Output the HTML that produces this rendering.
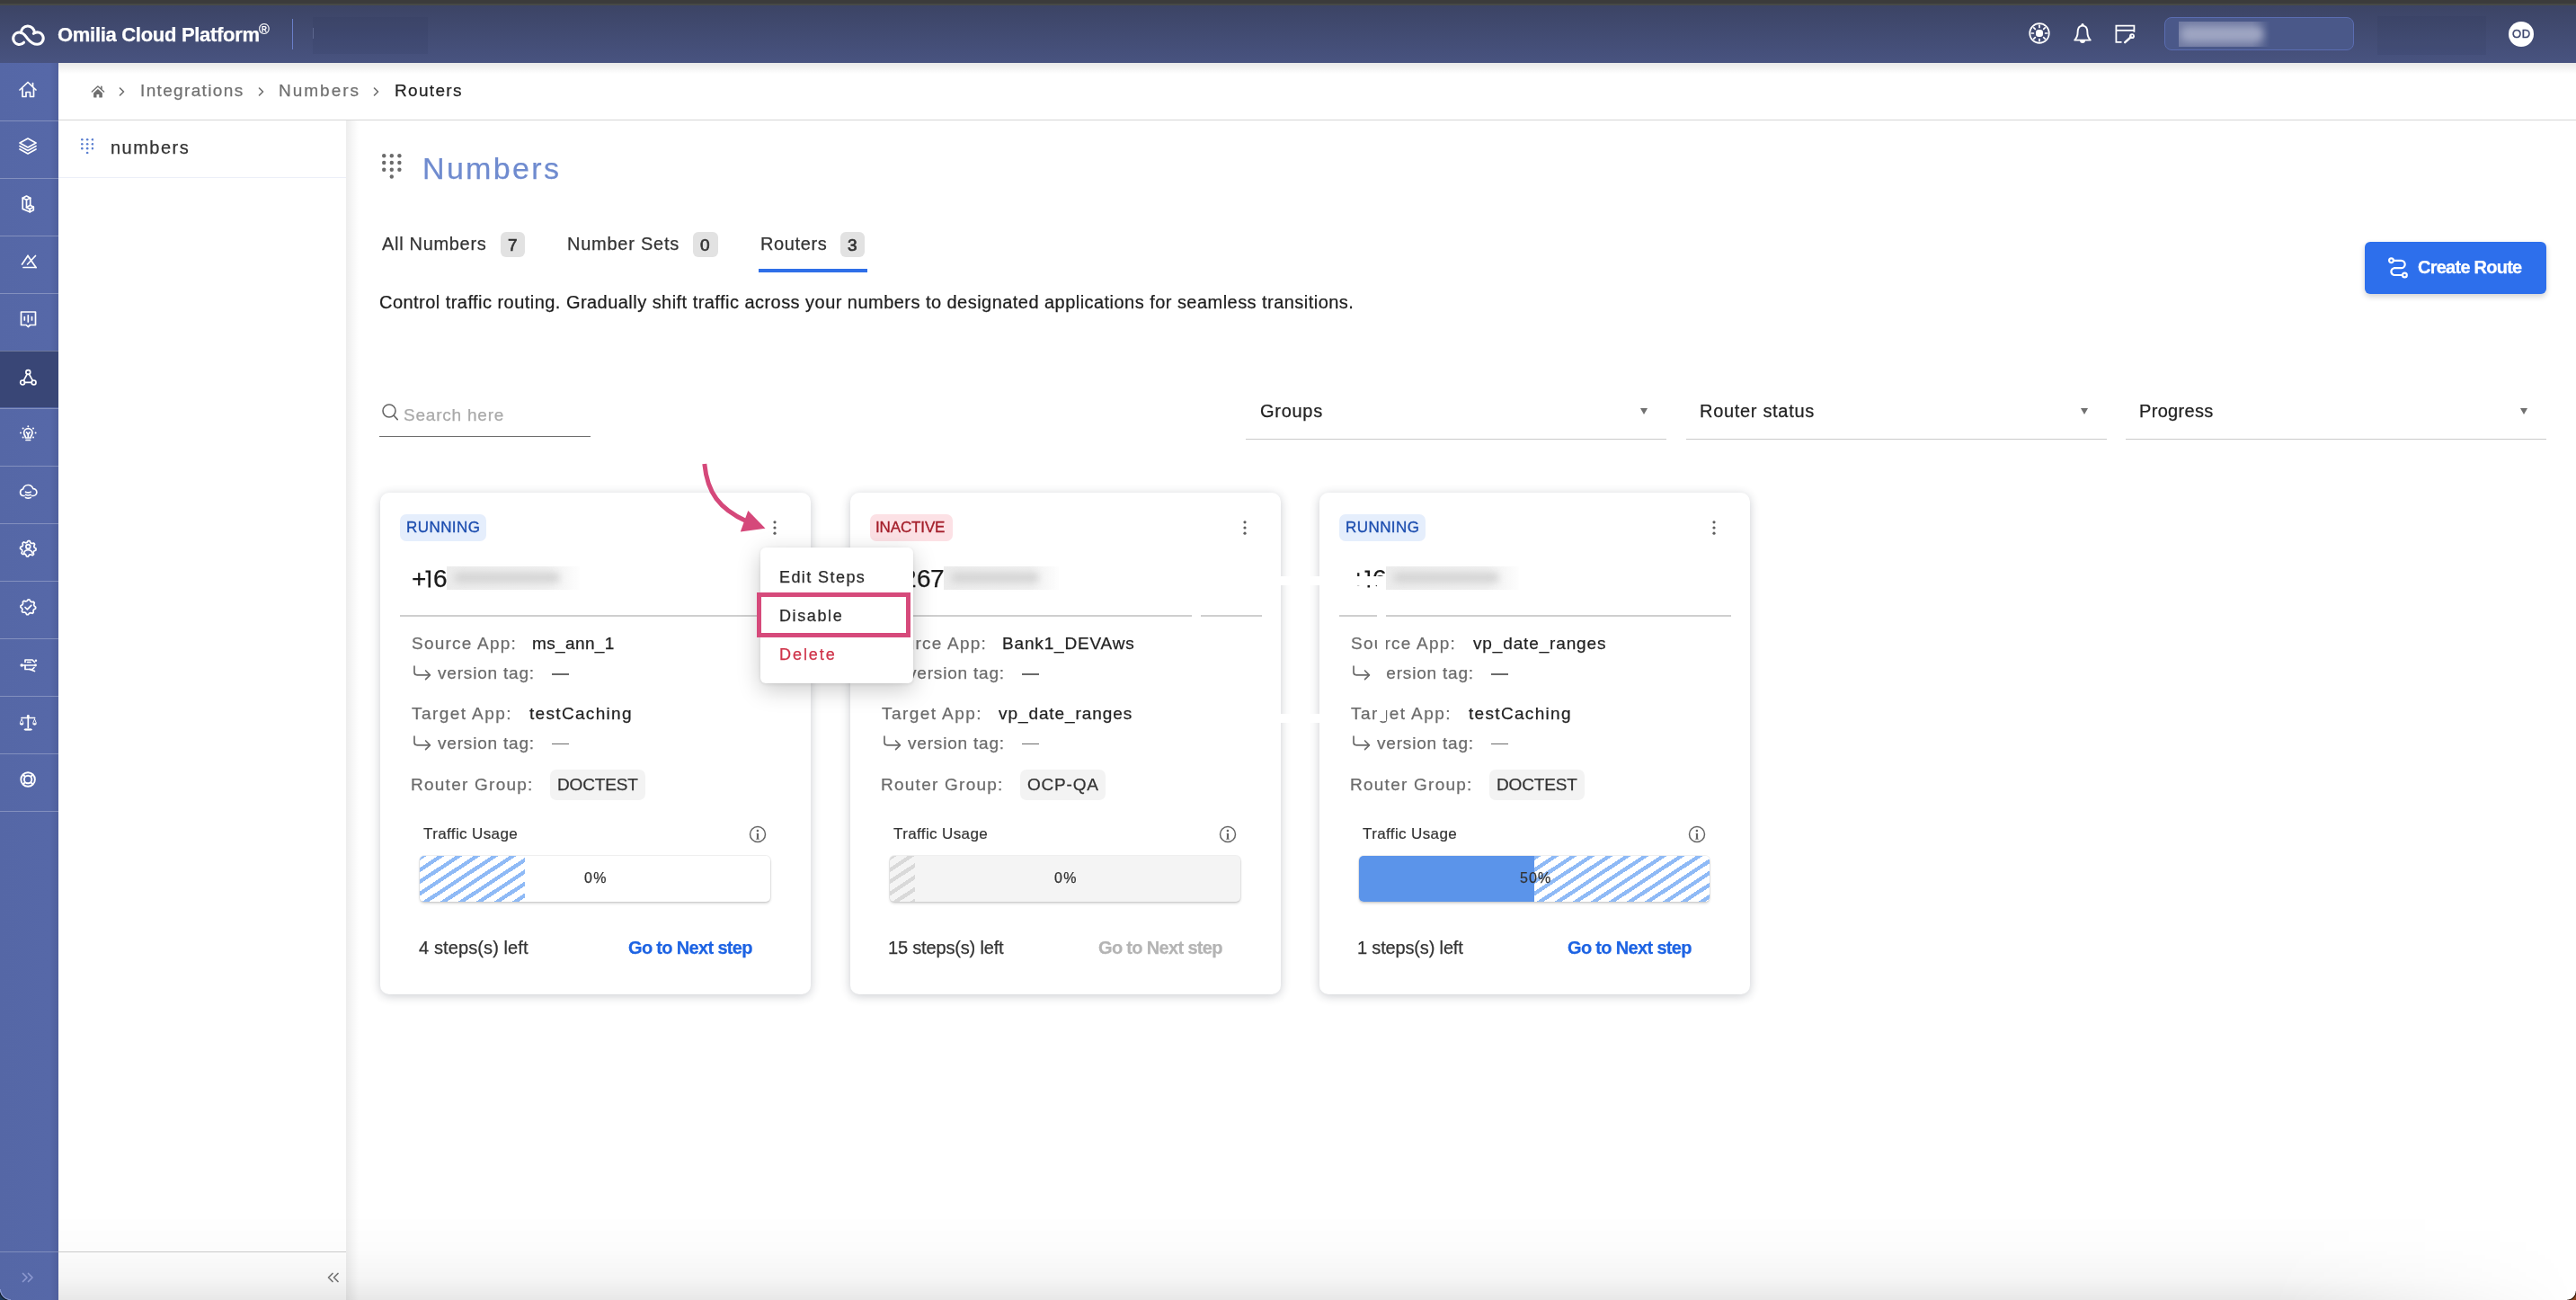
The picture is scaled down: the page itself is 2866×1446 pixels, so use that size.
<!DOCTYPE html><html><head><meta charset="utf-8"><title>Omilia Cloud Platform - Routers</title><style>
*{margin:0;padding:0;box-sizing:border-box}
html,body{width:2866px;height:1446px;overflow:hidden;background:#fff;font-family:"Liberation Sans",sans-serif}
.t{position:absolute;line-height:1;white-space:pre;will-change:transform;-webkit-text-stroke:0.25px currentColor}
.abs{position:absolute}
</style></head><body>
<div class="abs" style="left:0;top:0;width:2866px;height:6px;background:linear-gradient(180deg,#3b3b3b 0%,#3b3b3b 62%,#474946 72%,#474946 100%)"></div>
<div class="abs" style="left:0;top:6px;width:2866px;height:64px;background:linear-gradient(180deg,#3c4465 0%,#485380 100%)"></div>
<svg class="abs" style="left:8px;top:18px;" width="50" height="40" viewBox="0 0 50 40"><g fill="none" stroke="#fff" stroke-width="3" stroke-linecap="round"><path d="M18.6,29.2 A6.8,6.8 0 1,1 13.5,17.9 C19,17.9 21,23 23.3,25.8 C26,29 28.5,31.3 33.2,31.3 A6.7,6.7 0 1,0 29.3,19.4"/><path d="M15.4,18.8 A7.5,7.7 0 1,1 30.4,18.5"/></g></svg>
<div class="t" style="left:63.6px;top:28.1px;font-size:22px;color:#fff;font-weight:bold;letter-spacing:-0.30px;">Omilia Cloud Platform</div>
<div class="t" style="left:287.8px;top:25.4px;font-size:16px;color:#fff;font-weight:normal;letter-spacing:0.00px;">®</div>
<div class="abs" style="left:325px;top:21px;width:1.2px;height:34px;background:#6a7fc8"></div>
<div class="abs" style="left:348px;top:19px;width:128px;height:41px;background:rgba(40,48,80,0.11)"></div>
<div class="abs" style="left:348px;top:31px;width:1px;height:12px;background:rgba(150,160,200,0.35)"></div>
<svg class="abs" style="left:2256.5px;top:25.4px;" width="24" height="24" viewBox="0 0 24 24"><g fill="none" stroke="#fff" stroke-width="1.7" stroke-linecap="round"><circle cx="12" cy="12" r="10.8"/><line x1="18.60" y1="12.00" x2="20.80" y2="12.00"/><line x1="16.67" y1="16.67" x2="18.22" y2="18.22"/><line x1="12.00" y1="18.60" x2="12.00" y2="20.80"/><line x1="7.33" y1="16.67" x2="5.78" y2="18.22"/><line x1="5.40" y1="12.00" x2="3.20" y2="12.00"/><line x1="7.33" y1="7.33" x2="5.78" y2="5.78"/><line x1="12.00" y1="5.40" x2="12.00" y2="3.20"/><line x1="16.67" y1="7.33" x2="18.22" y2="5.78"/></g><rect x="8" y="8" width="8" height="8" rx="3.2" fill="#fff"/></svg><svg class="abs" style="left:2305.5px;top:24.5px;" width="22" height="25" viewBox="0 0 22 25"><g fill="none" stroke="#fff" stroke-width="1.9" stroke-linejoin="round"><path d="M11,3.6 C6.6,3.6 5.6,7.5 5.6,11 C5.6,15.5 4.4,17.4 2.2,19.6 L19.8,19.6 C17.6,17.4 16.4,15.5 16.4,11 C16.4,7.5 15.4,3.6 11,3.6 Z"/></g><circle cx="11" cy="2.6" r="1.6" fill="#fff"/><path d="M8,20 A3,3 0 0,0 14,20 Z" fill="#fff"/></svg><svg class="abs" style="left:2352.5px;top:26.5px;" width="24" height="23" viewBox="0 0 24 23"><g fill="none" stroke="#fff" stroke-width="1.8"><path d="M7.5,19.8 L1.4,19.8 L1.4,1.6 L21.4,1.6 L21.4,8.8"/><line x1="1.4" y1="6.8" x2="21.4" y2="6.8"/></g><circle cx="19" cy="13.2" r="2.9" fill="#fff"/><circle cx="19.3" cy="12.9" r="0.9" fill="#4a5584"/><path d="M17.5,14.5 L11.2,20.2" stroke="#fff" stroke-width="2.4" stroke-linecap="round"/></svg>
<div class="abs" style="left:2408px;top:19px;width:211px;height:37px;border-radius:8px;background:#4a5889;border:1.5px solid #5b6db2"></div>
<div class="abs" style="left:2424px;top:24px;width:102px;height:28px;overflow:hidden;background:linear-gradient(90deg,rgba(130,138,174,0.7) 0%,rgba(130,138,174,0.65) 80%,rgba(130,138,174,0) 100%)"><div style="position:absolute;left:2px;top:5px;width:92px;height:18px;border-radius:8px;background:#9ea5c2;filter:blur(4px)"></div></div>
<div class="abs" style="left:2645px;top:18px;width:121px;height:43px;background:rgba(40,48,80,0.10)"></div>
<div class="abs" style="left:2791px;top:23.5px;width:28px;height:28px;border-radius:50%;background:#fff"></div>
<div class="t" style="left:2794.8px;top:31.4px;font-size:13px;color:#3f4870;font-weight:normal;letter-spacing:0.75px;-webkit-text-stroke:0.4px #3f4870;">OD</div>
<div class="abs" style="left:0;top:70px;width:65px;height:1376px;background:linear-gradient(90deg,#5567a6 0%,#5668a8 85%,#4f5f9c 100%)"></div>
<div class="abs" style="left:0;top:389.5px;width:65px;height:63.5px;background:#394676"></div>
<div class="abs" style="left:0;top:133.5px;width:65px;height:1px;background:rgba(255,255,255,0.27)"></div>
<div class="abs" style="left:0;top:197.5px;width:65px;height:1px;background:rgba(255,255,255,0.27)"></div>
<div class="abs" style="left:0;top:261.5px;width:65px;height:1px;background:rgba(255,255,255,0.27)"></div>
<div class="abs" style="left:0;top:325.5px;width:65px;height:1px;background:rgba(255,255,255,0.27)"></div>
<div class="abs" style="left:0;top:389.5px;width:65px;height:1px;background:rgba(255,255,255,0.27)"></div>
<div class="abs" style="left:0;top:453.5px;width:65px;height:1px;background:rgba(255,255,255,0.27)"></div>
<div class="abs" style="left:0;top:517.5px;width:65px;height:1px;background:rgba(255,255,255,0.27)"></div>
<div class="abs" style="left:0;top:581.5px;width:65px;height:1px;background:rgba(255,255,255,0.27)"></div>
<div class="abs" style="left:0;top:645.5px;width:65px;height:1px;background:rgba(255,255,255,0.27)"></div>
<div class="abs" style="left:0;top:709.5px;width:65px;height:1px;background:rgba(255,255,255,0.27)"></div>
<div class="abs" style="left:0;top:773.5px;width:65px;height:1px;background:rgba(255,255,255,0.27)"></div>
<div class="abs" style="left:0;top:837.5px;width:65px;height:1px;background:rgba(255,255,255,0.27)"></div>
<div class="abs" style="left:0;top:901.5px;width:65px;height:1px;background:rgba(255,255,255,0.27)"></div>
<svg class="abs" style="left:21px;top:89px;" width="20" height="20" viewBox="0 0 20 20"><g fill="none" stroke="#fff" stroke-width="1.7" stroke-linecap="round" stroke-linejoin="round"><path d="M1,11 L10,2.5 L19,11"/><path d="M15.5,3.5 L15.5,7.5"/><path d="M4,9.5 L4,18.5 L8,18.5 L8,13.5 L12.5,13.5 L12.5,18.5 L16.5,18.5 L16.5,9.5"/></g></svg><svg class="abs" style="left:21px;top:152px;" width="20" height="21" viewBox="0 0 20 21"><g fill="none" stroke="#fff" stroke-width="1.7" stroke-linecap="round" stroke-linejoin="round"><path d="M10,2 L19,7 L10,12 L1,7 Z"/><path d="M1,10.5 L10,15.5 L19,10.5"/><path d="M1,14 L10,19 L19,14"/></g></svg><svg class="abs" style="left:18px;top:205px;" width="28" height="40" viewBox="0 0 28 40"><g fill="none" stroke="#fff" stroke-width="1.7" stroke-linecap="round" stroke-linejoin="round"><path d="M7.2,15.2 L11.5,13.1 L15.7,15.2 L11.5,17.3 Z"/><path d="M7.2,15.2 L7.2,27.4 L15.2,30.8 L19.3,28.8 L19.3,25.2 L15.5,23.3"/><path d="M11.5,17.3 L11.5,25.8 L15.2,27.6 L19.3,25.2"/><path d="M15.7,15.2 L15.7,23.2"/><path d="M15.2,27.6 L15.2,30.8"/><path d="M11.5,25.8 L15.5,23.3"/></g></svg><svg class="abs" style="left:21px;top:282px;" width="22" height="18" viewBox="0 0 22 18"><g fill="none" stroke="#fff" stroke-width="1.7" stroke-linecap="round" stroke-linejoin="round"><path d="M3.5,12 L10,2.5"/><path d="M10,2.5 L19,15.5"/><path d="M5,15.5 L19,15.5"/><path d="M9.5,12 L18.5,2.5"/></g></svg><svg class="abs" style="left:21px;top:345px;" width="21" height="21" viewBox="0 0 21 21"><g fill="none" stroke="#fff" stroke-width="1.7" stroke-linecap="round" stroke-linejoin="round"><path d="M2.5,2 L18.5,2 L18.5,16.5 L12.5,16.5 L10.3,18.5 L8.2,16.5 L2.5,16.5 Z"/><path d="M6.3,7.5 L6.3,11"/><path d="M10.3,5.8 L10.3,13"/><path d="M14.5,7.5 L14.5,11"/></g></svg><svg class="abs" style="left:21px;top:410px;" width="21" height="20" viewBox="0 0 21 20"><g fill="none" stroke="#fff" stroke-width="1.7" stroke-linecap="round" stroke-linejoin="round"><circle cx="10.3" cy="4" r="2.4"/><circle cx="4.1" cy="15.4" r="2.4"/><circle cx="16.6" cy="15.4" r="2.4"/><path d="M9.2,6.1 L5.3,13.3"/><path d="M11.4,6.1 L15.4,13.3"/><path d="M6.5,15.4 L14.2,15.4"/></g></svg><svg class="abs" style="left:21px;top:472px;" width="21" height="21" viewBox="0 0 21 21"><g fill="none" stroke="#fff" stroke-width="1.7" stroke-linecap="round" stroke-linejoin="round"><path d="M7.5,15 C7.5,12.5 5.6,12 5.6,9.3 A4.7,4.7 0 0,1 15,9.3 C15,12 13.1,12.5 13.1,15 Z"/><path d="M8,17.5 L12.6,17.5"/><path d="M8.6,9 L10.3,11 L12,9"/><path d="M10.3,11 L10.3,14"/></g><g fill="#fff"><circle cx="10.3" cy="2.2" r="1"/><circle cx="16" cy="4.5" r="1"/><circle cx="4.6" cy="4.5" r="1"/><circle cx="2" cy="9.5" r="1"/><circle cx="18.6" cy="9.5" r="1"/><circle cx="4.6" cy="14.5" r="1"/><circle cx="16" cy="14.5" r="1"/></g></svg><svg class="abs" style="left:21px;top:537px;" width="21" height="20" viewBox="0 0 21 20"><g fill="none" stroke="#fff" stroke-width="1.7" stroke-linecap="round" stroke-linejoin="round"><path d="M6,14.5 L5,14.5 A3.8,3.8 0 0,1 4.6,7 A5.8,5.8 0 0,1 15.8,6.6 A3.9,3.9 0 0,1 16,14.5 L14.5,14.5"/><path d="M7.5,10.2 Q10.3,11.6 13.1,10.2"/><path d="M7.5,13.3 Q10.3,14.7 13.1,13.3"/><path d="M7.5,16.4 Q10.3,17.8 13.1,16.4"/></g></svg><svg class="abs" style="left:21px;top:600px;" width="21" height="21" viewBox="0 0 21 21"><g fill="none" stroke="#fff" stroke-width="1.7" stroke-linecap="round" stroke-linejoin="round"><path d="M10.30,1.50 L12.02,1.67 L12.98,3.83 L14.19,4.48 L16.52,4.08 L17.62,5.41 L16.77,7.62 L17.17,8.93 L19.10,10.30 L18.93,12.02 L16.77,12.98 L16.12,14.19 L16.52,16.52 L15.19,17.62 L12.98,16.77 L11.67,17.17 L10.30,19.10 L8.58,18.93 L7.62,16.77 L6.41,16.12 L4.08,16.52 L2.98,15.19 L3.83,12.98 L3.43,11.67 L1.50,10.30 L1.67,8.58 L3.83,7.62 L4.48,6.41 L4.08,4.08 L5.41,2.98 L7.62,3.83 L8.93,3.43 Z"/><circle cx="10.3" cy="8" r="2.4"/><path d="M5.6,15.2 A4.8,4.3 0 0,1 15,15.2"/></g></svg><svg class="abs" style="left:22px;top:666px;" width="19" height="19" viewBox="0 0 19 19"><g fill="none" stroke="#fff" stroke-width="1.7" stroke-linecap="round" stroke-linejoin="round"><path d="M9.30,0.90 L10.94,1.06 L11.94,2.93 L13.13,3.56 L15.24,3.36 L16.28,4.63 L15.67,6.66 L16.07,7.95 L17.70,9.30 L17.54,10.94 L15.67,11.94 L15.04,13.13 L15.24,15.24 L13.97,16.28 L11.94,15.67 L10.65,16.07 L9.30,17.70 L7.66,17.54 L6.66,15.67 L5.47,15.04 L3.36,15.24 L2.32,13.97 L2.93,11.94 L2.53,10.65 L0.90,9.30 L1.06,7.66 L2.93,6.66 L3.56,5.47 L3.36,3.36 L4.63,2.32 L6.66,2.93 L7.95,2.53 Z"/><path d="M6,9.5 L8.4,11.8 L12.8,7.3"/></g></svg><svg class="abs" style="left:21px;top:731px;" width="22" height="18" viewBox="0 0 22 18"><g fill="none" stroke="#fff" stroke-width="1.7" stroke-linecap="round" stroke-linejoin="round"><path d="M7,5.5 L7,3 L15,3 L17.5,5.5"/><path d="M4,9 L18,9"/><path d="M7,9 L7,13.5 L15,13.5 L17,11.5"/><path d="M9.5,5.5 L13,5.5"/><path d="M12,13.5 L17.5,15.5"/></g><circle cx="3.2" cy="9" r="1.8" fill="#fff"/><circle cx="18.5" cy="9" r="1.4" fill="#fff"/><circle cx="19" cy="3.8" r="1.2" fill="#fff"/></svg><svg class="abs" style="left:21px;top:794px;" width="21" height="20" viewBox="0 0 21 20"><g fill="none" stroke="#fff" stroke-width="1.7" stroke-linecap="round" stroke-linejoin="round"><path d="M10.3,2 L10.3,15.5"/><path d="M3,4.5 L17.6,4.5"/><path d="M6.5,17.5 L14,17.5"/></g><g fill="#fff"><path d="M0.7,10.3 L5.5,10.3 A2.4,2.4 0 0,1 0.7,10.3 Z M3.1,4.8 L0.9,10 L1.8,10 L3.1,6.8 L4.4,10 L5.3,10 Z"/><path d="M15.1,10.3 L19.9,10.3 A2.4,2.4 0 0,1 15.1,10.3 Z M17.5,4.8 L15.3,10 L16.2,10 L17.5,6.8 L18.8,10 L19.7,10 Z"/><path d="M6.5,16.5 L14,16.5 L13.5,18.5 L7,18.5 Z"/><circle cx="10.3" cy="2.5" r="1.5"/></g></svg><svg class="abs" style="left:21px;top:857px;" width="21" height="21" viewBox="0 0 21 21"><g fill="none" stroke="#fff" stroke-width="1.9"><circle cx="10.1" cy="10" r="7.8"/><circle cx="10.1" cy="10" r="4.2"/><path d="M4.6,4.5 L7.2,7.1 M15.6,4.5 L13,7.1 M4.6,15.5 L7.2,12.9 M15.6,15.5 L13,12.9"/></g></svg>
<div class="abs" style="left:0;top:1392px;width:65px;height:1px;background:rgba(255,255,255,0.25)"></div>
<svg class="abs" style="left:24.2px;top:1415px;" width="14" height="12" viewBox="0 0 14 12"><path d="M1.5,1.5 L6,6 L1.5,10.5 M7.5,1.5 L12,6 L7.5,10.5" fill="none" stroke="#8d99d0" stroke-width="1.7" stroke-linecap="round" stroke-linejoin="round"/></svg>
<div class="abs" style="left:65px;top:70px;width:2801px;height:64px;background:#fff;border-bottom:1.5px solid #d6d6d6"></div>
<div class="abs" style="left:65px;top:70px;width:2801px;height:12px;background:linear-gradient(180deg,rgba(0,0,0,0.09),rgba(0,0,0,0))"></div>
<svg class="abs" style="left:100px;top:94px;" width="18" height="16" viewBox="0 0 18 16"><path d="M2.3,8.1 L8.9,2 L15.6,8.1" fill="none" stroke="#707070" stroke-width="1.4" stroke-linecap="round" stroke-linejoin="round"/><path d="M12.9,2.4 L12.9,4.8" stroke="#707070" stroke-width="1.6" stroke-linecap="round"/><path d="M8.9,5.1 L13.9,9.4 L13.9,14 Q13.9,14.4 13.4,14.4 L10.3,14.4 L10.3,10.9 L7.5,10.9 L7.5,14.4 L4.6,14.4 Q4.1,14.4 4.1,14 L4.1,9.4 Z" fill="#707070"/></svg>
<svg class="abs" style="left:131.5px;top:97px;" width="7" height="10" viewBox="0 0 7 10"><path d="M1.5,1 L5.5,5 L1.5,9" fill="none" stroke="#6d6d6d" stroke-width="1.6" stroke-linecap="round" stroke-linejoin="round"/></svg>
<svg class="abs" style="left:286.5px;top:97px;" width="7" height="10" viewBox="0 0 7 10"><path d="M1.5,1 L5.5,5 L1.5,9" fill="none" stroke="#6d6d6d" stroke-width="1.6" stroke-linecap="round" stroke-linejoin="round"/></svg>
<svg class="abs" style="left:414.5px;top:97px;" width="7" height="10" viewBox="0 0 7 10"><path d="M1.5,1 L5.5,5 L1.5,9" fill="none" stroke="#6d6d6d" stroke-width="1.6" stroke-linecap="round" stroke-linejoin="round"/></svg>
<div class="t" style="left:156.2px;top:90.9px;font-size:19px;color:#707070;font-weight:normal;letter-spacing:1.35px;">Integrations</div>
<div class="t" style="left:309.9px;top:90.9px;font-size:19px;color:#707070;font-weight:normal;letter-spacing:1.99px;">Numbers</div>
<div class="t" style="left:438.9px;top:90.9px;font-size:19px;color:#222;font-weight:normal;letter-spacing:1.33px;">Routers</div>
<div class="abs" style="left:385px;top:134px;width:14px;height:1312px;background:linear-gradient(90deg,rgba(0,0,0,0.07),rgba(0,0,0,0))"></div>
<div class="abs" style="left:65px;top:197px;width:320px;height:1px;background:#eceff8"></div>
<svg class="abs" style="left:90px;top:154px;" width="14.3" height="17.4" viewBox="0 0 14.3 17.4"><g fill="#5b7fd0"><circle cx="1.30" cy="1.30" r="1.3"/><circle cx="7.15" cy="1.30" r="1.3"/><circle cx="13.00" cy="1.30" r="1.3"/><circle cx="1.30" cy="6.23" r="1.3"/><circle cx="7.15" cy="6.23" r="1.3"/><circle cx="13.00" cy="6.23" r="1.3"/><circle cx="1.30" cy="11.17" r="1.3"/><circle cx="7.15" cy="11.17" r="1.3"/><circle cx="13.00" cy="11.17" r="1.3"/><circle cx="7.15" cy="16.10" r="1.3"/></g></svg>
<div class="t" style="left:123.2px;top:154.2px;font-size:20px;color:#333;font-weight:normal;letter-spacing:1.47px;">numbers</div>
<div class="abs" style="left:65px;top:1392px;width:320px;height:1px;background:#cfcfcf"></div>
<svg class="abs" style="left:364.2px;top:1415px;" width="14" height="12" viewBox="0 0 14 12"><path d="M6,1.5 L1.5,6 L6,10.5 M12,1.5 L7.5,6 L12,10.5" fill="none" stroke="#777" stroke-width="1.7" stroke-linecap="round" stroke-linejoin="round"/></svg>
<svg class="abs" style="left:425px;top:171px;" width="21.6" height="27.7" viewBox="0 0 21.6 27.7"><g fill="#6b6b6b"><circle cx="2.20" cy="2.20" r="2.2"/><circle cx="10.80" cy="2.20" r="2.2"/><circle cx="19.40" cy="2.20" r="2.2"/><circle cx="2.20" cy="9.97" r="2.2"/><circle cx="10.80" cy="9.97" r="2.2"/><circle cx="19.40" cy="9.97" r="2.2"/><circle cx="2.20" cy="17.73" r="2.2"/><circle cx="10.80" cy="17.73" r="2.2"/><circle cx="19.40" cy="17.73" r="2.2"/><circle cx="10.80" cy="25.50" r="2.2"/></g></svg>
<div class="t" style="left:470.2px;top:170.1px;font-size:34px;color:#6f8bcf;font-weight:normal;letter-spacing:2.33px;">Numbers</div>
<div class="t" style="left:425.0px;top:261.2px;font-size:20px;color:#333;font-weight:normal;letter-spacing:0.68px;">All Numbers</div>
<div class="abs" style="left:557px;top:258px;width:27px;height:28px;border-radius:6px;background:#e2e2e2"></div><div class="t" style="left:565.1px;top:262.5px;font-size:19px;color:#333;font-weight:normal;letter-spacing:0.00px;-webkit-text-stroke:0.7px #333;">7</div>
<div class="t" style="left:631.0px;top:261.2px;font-size:20px;color:#333;font-weight:normal;letter-spacing:0.75px;">Number Sets</div>
<div class="abs" style="left:770.5px;top:258px;width:28px;height:28px;border-radius:6px;background:#e2e2e2"></div><div class="t" style="left:779.2px;top:262.5px;font-size:19px;color:#333;font-weight:normal;letter-spacing:0.00px;-webkit-text-stroke:0.7px #333;">0</div>
<div class="t" style="left:845.9px;top:261.2px;font-size:20px;color:#333;font-weight:normal;letter-spacing:0.64px;">Routers</div>
<div class="abs" style="left:935px;top:258px;width:27px;height:28px;border-radius:6px;background:#e2e2e2"></div><div class="t" style="left:943.2px;top:262.5px;font-size:19px;color:#333;font-weight:normal;letter-spacing:0.00px;-webkit-text-stroke:0.7px #333;">3</div>
<div class="abs" style="left:844px;top:298.5px;width:121px;height:4px;background:#2f6fe8"></div>
<div class="t" style="left:421.5px;top:326.0px;font-size:20px;color:#1e1e1e;font-weight:normal;letter-spacing:0.46px;">Control traffic routing. Gradually shift traffic across your numbers to designated applications for seamless transitions.</div>
<div class="abs" style="left:2631px;top:269px;width:202px;height:58px;border-radius:6px;background:#2d6fec;box-shadow:0 3px 6px rgba(0,0,0,0.18)"></div>
<svg class="abs" style="left:2656.5px;top:286.2px;" width="23" height="25" viewBox="0 0 23 25"><g fill="none" stroke="#fff" stroke-width="2.2" stroke-linecap="round"><circle cx="3.5" cy="3.8" r="2.4"/><circle cx="18.4" cy="20" r="2.4"/><path d="M6.8,3.8 L14.5,3.8 A4.2,4.2 0 0,1 14.5,12.2 L6.5,12.2 A4,4 0 0,0 6.5,20 L15,20"/></g></svg>
<div class="t" style="left:2689.9px;top:287.2px;font-size:20px;color:#fff;font-weight:bold;letter-spacing:-0.75px;">Create Route</div>
<svg class="abs" style="left:424.8px;top:448.8px;" width="19" height="19" viewBox="0 0 19 19"><g fill="none" stroke="#666" stroke-width="1.6" stroke-linecap="round"><circle cx="8" cy="8" r="7"/><path d="M13,13 L17.2,17.6"/></g></svg>
<div class="t" style="left:448.5px;top:451.7px;font-size:19px;color:#a9a9a9;font-weight:normal;letter-spacing:0.78px;">Search here</div>
<div class="abs" style="left:422px;top:484.5px;width:235px;height:1.5px;background:#6e6e6e"></div>
<div class="t" style="left:1401.5px;top:447.4px;font-size:20px;color:#222;font-weight:normal;letter-spacing:0.71px;">Groups</div>
<div class="abs" style="left:1825px;top:454px;width:0;height:0;border-left:4.5px solid transparent;border-right:4.5px solid transparent;border-top:7px solid #707070"></div>
<div class="abs" style="left:1386px;top:488px;width:468px;height:1px;background:#cbcbcb"></div>
<div class="t" style="left:1891.0px;top:447.4px;font-size:20px;color:#222;font-weight:normal;letter-spacing:0.69px;">Router status</div>
<div class="abs" style="left:2315px;top:454px;width:0;height:0;border-left:4.5px solid transparent;border-right:4.5px solid transparent;border-top:7px solid #707070"></div>
<div class="abs" style="left:1876px;top:488px;width:468px;height:1px;background:#cbcbcb"></div>
<div class="t" style="left:2380.0px;top:447.4px;font-size:20px;color:#222;font-weight:normal;letter-spacing:0.32px;">Progress</div>
<div class="abs" style="left:2804px;top:454px;width:0;height:0;border-left:4.5px solid transparent;border-right:4.5px solid transparent;border-top:7px solid #707070"></div>
<div class="abs" style="left:2365px;top:488px;width:468px;height:1px;background:#cbcbcb"></div>
<div class="abs" style="left:422.5px;top:548px;width:479px;height:558px;border-radius:10px;background:#fff;box-shadow:0 2px 11px rgba(35,40,60,0.24)"></div>
<div class="abs" style="left:444.5px;top:572px;width:96.5px;height:30px;border-radius:7px;background:#e5eefc"></div>
<div class="t" style="left:451.8px;top:578.3px;font-size:17px;color:#1d4eaf;font-weight:normal;letter-spacing:0.44px;-webkit-text-stroke:0.35px #1d4eaf;">RUNNING</div>
<svg class="abs" style="left:859.1px;top:579.1px;" width="6" height="16.5" viewBox="0 0 6 16.5"><g fill="#5e5e5e"><circle cx="3" cy="1.8" r="1.6"/><circle cx="3" cy="8" r="1.6"/><circle cx="3" cy="14.2" r="1.6"/></g></svg>
<div class="t" style="left:457.8px;top:630.1px;font-size:28px;color:#1b1b1b;font-weight:normal;letter-spacing:0.00px;">+</div>
<svg class="abs" style="left:473.0px;top:633px" width="8" height="22" viewBox="0 0 8 22"><path d="M0.5,1.4 L6,1.4 L6,20.6 L3.5,20.6 L3.5,3.8 L0.5,3.8 Z" fill="#1b1b1b"/></svg>
<div class="t" style="left:481.5px;top:630.1px;font-size:28px;color:#1b1b1b;font-weight:normal;letter-spacing:0.00px;">6</div>
<div class="abs" style="left:497.0px;top:629.5px;width:148px;height:26.5px;background:linear-gradient(90deg,#ececec,#f0f0f0 75%,rgba(250,250,250,0.3))"></div>
<div class="abs" style="left:505.0px;top:637px;width:118px;height:11px;border-radius:6px;background:#d3d3d3;filter:blur(4.5px)"></div>
<div class="abs" style="left:444.5px;top:684px;width:436px;height:1.5px;background:#cfcfcf"></div>
<div class="t" style="left:457.5px;top:706.0px;font-size:19px;color:#6b6b6b;font-weight:normal;letter-spacing:1.23px;">Source App:</div>
<div class="t" style="left:592.2px;top:706.0px;font-size:19px;color:#222;font-weight:normal;letter-spacing:0.38px;">ms_ann_1</div>
<svg class="abs" style="left:459.0px;top:740px;" width="21" height="17" viewBox="0 0 21 17"><g fill="none" stroke="#6b6b6b" stroke-width="1.7" stroke-linecap="round" stroke-linejoin="round"><path d="M2,1.2 L2,7.8 Q2,10.8 5,10.8 L19.2,10.8"/><path d="M14.6,6 L19.4,10.8 L14.6,15.6"/></g></svg>
<div class="t" style="left:487.0px;top:739.0px;font-size:19px;color:#6b6b6b;font-weight:normal;letter-spacing:0.81px;">version tag:</div>
<div class="abs" style="left:614.0px;top:749px;width:19px;height:1.5px;background:#6a6a6a"></div>
<div class="t" style="left:458.0px;top:784.0px;font-size:19px;color:#6b6b6b;font-weight:normal;letter-spacing:1.43px;">Target App:</div>
<div class="t" style="left:589.2px;top:784.0px;font-size:19px;color:#222;font-weight:normal;letter-spacing:1.32px;">testCaching</div>
<svg class="abs" style="left:459.0px;top:817.5px;" width="21" height="17" viewBox="0 0 21 17"><g fill="none" stroke="#6b6b6b" stroke-width="1.7" stroke-linecap="round" stroke-linejoin="round"><path d="M2,1.2 L2,7.8 Q2,10.8 5,10.8 L19.2,10.8"/><path d="M14.6,6 L19.4,10.8 L14.6,15.6"/></g></svg>
<div class="t" style="left:487.0px;top:816.5px;font-size:19px;color:#6b6b6b;font-weight:normal;letter-spacing:0.81px;">version tag:</div>
<div class="abs" style="left:614.0px;top:826.6px;width:19px;height:1.5px;background:#6a6a6a"></div>
<div class="t" style="left:457.0px;top:863.0px;font-size:19px;color:#6b6b6b;font-weight:normal;letter-spacing:1.25px;">Router Group:</div>
<div class="abs" style="left:612.0px;top:856.3px;width:105.5px;height:33.3px;border-radius:7px;background:#f3f3f3"></div>
<div class="t" style="left:619.5px;top:863.0px;font-size:19px;color:#333;font-weight:normal;letter-spacing:-0.17px;">DOCTEST</div>
<div class="t" style="left:471.2px;top:918.7px;font-size:17px;color:#333;font-weight:normal;letter-spacing:0.38px;-webkit-text-stroke:0.2px #333;">Traffic Usage</div>
<svg class="abs" style="left:833.2px;top:918.2px;" width="20" height="20" viewBox="0 0 20 20"><circle cx="10" cy="10" r="8.5" fill="none" stroke="#666" stroke-width="1.5"/><circle cx="9.9" cy="6.1" r="1.3" fill="#666"/><path d="M8.6,9 L11.1,9 L11.1,14.6 L12,15.7 L8,15.7 L8.9,14.6 L8.9,9.9 Z" fill="#666"/></svg>
<div class="abs" style="left:466.8px;top:951.7px;width:390.5px;height:51.5px;border-radius:5px;background:#fff;box-shadow:0 0 0 1px rgba(0,0,0,0.06),0 2px 3px rgba(0,0,0,0.16);overflow:hidden"><div style="position:absolute;left:0;top:0;width:117px;height:100%;background:repeating-linear-gradient(146.6deg,#8fbaf6 0px,#8fbaf6 4.2px,#fff 4.2px,#fff 11px)"></div></div>
<div class="t" style="left:650.4px;top:968.9px;font-size:16px;color:#333;font-weight:normal;letter-spacing:1.35px;">0%</div>
<div class="t" style="left:465.5px;top:1044.4px;font-size:20px;color:#333;font-weight:normal;letter-spacing:0.11px;">4 steps(s) left</div>
<div class="t" style="left:698.8px;top:1044.4px;font-size:20px;color:#1d63e3;font-weight:bold;letter-spacing:-0.66px;">Go to Next step</div>
<div class="abs" style="left:945.5px;top:548px;width:479px;height:558px;border-radius:10px;background:#fff;box-shadow:0 2px 11px rgba(35,40,60,0.24)"></div>
<div class="abs" style="left:967.5px;top:572px;width:92.5px;height:30px;border-radius:7px;background:#fce1e5"></div>
<div class="t" style="left:974.0px;top:578.3px;font-size:17px;color:#a41f2b;font-weight:normal;letter-spacing:-0.14px;-webkit-text-stroke:0.35px #a41f2b;">INACTIVE</div>
<svg class="abs" style="left:1382.1px;top:579.1px;" width="6" height="16.5" viewBox="0 0 6 16.5"><g fill="#5e5e5e"><circle cx="3" cy="1.8" r="1.6"/><circle cx="3" cy="8" r="1.6"/><circle cx="3" cy="14.2" r="1.6"/></g></svg>
<div class="t" style="left:980.8px;top:630.1px;font-size:28px;color:#1b1b1b;font-weight:normal;letter-spacing:0.00px;">+</div>
<svg class="abs" style="left:995.0px;top:633px" width="8" height="22" viewBox="0 0 8 22"><path d="M0.5,1.4 L6,1.4 L6,20.6 L3.5,20.6 L3.5,3.8 L0.5,3.8 Z" fill="#1b1b1b"/></svg>
<div class="t" style="left:1003.5px;top:630.1px;font-size:28px;color:#1b1b1b;font-weight:normal;letter-spacing:0.00px;">2</div>
<div class="t" style="left:1019.5px;top:630.1px;font-size:28px;color:#1b1b1b;font-weight:normal;letter-spacing:0.00px;">6</div>
<div class="t" style="left:1035.0px;top:630.1px;font-size:28px;color:#1b1b1b;font-weight:normal;letter-spacing:0.00px;">7</div>
<div class="abs" style="left:1050.0px;top:629.5px;width:128px;height:26.5px;background:linear-gradient(90deg,#ececec,#f0f0f0 75%,rgba(250,250,250,0.3))"></div>
<div class="abs" style="left:1058.0px;top:637px;width:98px;height:11px;border-radius:6px;background:#d3d3d3;filter:blur(4.5px)"></div>
<div class="abs" style="left:967.5px;top:684px;width:436px;height:1.5px;background:#cfcfcf"></div>
<div class="t" style="left:980.5px;top:706.0px;font-size:19px;color:#6b6b6b;font-weight:normal;letter-spacing:1.23px;">Source App:</div>
<div class="t" style="left:1115.0px;top:706.0px;font-size:19px;color:#222;font-weight:normal;letter-spacing:0.83px;">Bank1_DEVAws</div>
<svg class="abs" style="left:982.0px;top:740px;" width="21" height="17" viewBox="0 0 21 17"><g fill="none" stroke="#6b6b6b" stroke-width="1.7" stroke-linecap="round" stroke-linejoin="round"><path d="M2,1.2 L2,7.8 Q2,10.8 5,10.8 L19.2,10.8"/><path d="M14.6,6 L19.4,10.8 L14.6,15.6"/></g></svg>
<div class="t" style="left:1010.0px;top:739.0px;font-size:19px;color:#6b6b6b;font-weight:normal;letter-spacing:0.81px;">version tag:</div>
<div class="abs" style="left:1137.0px;top:749px;width:19px;height:1.5px;background:#6a6a6a"></div>
<div class="t" style="left:981.0px;top:784.0px;font-size:19px;color:#6b6b6b;font-weight:normal;letter-spacing:1.43px;">Target App:</div>
<div class="t" style="left:1111.0px;top:784.0px;font-size:19px;color:#222;font-weight:normal;letter-spacing:0.92px;">vp_date_ranges</div>
<svg class="abs" style="left:982.0px;top:817.5px;" width="21" height="17" viewBox="0 0 21 17"><g fill="none" stroke="#6b6b6b" stroke-width="1.7" stroke-linecap="round" stroke-linejoin="round"><path d="M2,1.2 L2,7.8 Q2,10.8 5,10.8 L19.2,10.8"/><path d="M14.6,6 L19.4,10.8 L14.6,15.6"/></g></svg>
<div class="t" style="left:1010.0px;top:816.5px;font-size:19px;color:#6b6b6b;font-weight:normal;letter-spacing:0.81px;">version tag:</div>
<div class="abs" style="left:1137.0px;top:826.6px;width:19px;height:1.5px;background:#6a6a6a"></div>
<div class="t" style="left:980.0px;top:863.0px;font-size:19px;color:#6b6b6b;font-weight:normal;letter-spacing:1.25px;">Router Group:</div>
<div class="abs" style="left:1135.0px;top:856.3px;width:94.5px;height:33.3px;border-radius:7px;background:#f3f3f3"></div>
<div class="t" style="left:1143.2px;top:863.0px;font-size:19px;color:#333;font-weight:normal;letter-spacing:0.80px;">OCP-QA</div>
<div class="t" style="left:994.2px;top:918.7px;font-size:17px;color:#333;font-weight:normal;letter-spacing:0.38px;-webkit-text-stroke:0.2px #333;">Traffic Usage</div>
<svg class="abs" style="left:1356.2px;top:918.2px;" width="20" height="20" viewBox="0 0 20 20"><circle cx="10" cy="10" r="8.5" fill="none" stroke="#666" stroke-width="1.5"/><circle cx="9.9" cy="6.1" r="1.3" fill="#666"/><path d="M8.6,9 L11.1,9 L11.1,14.6 L12,15.7 L8,15.7 L8.9,14.6 L8.9,9.9 Z" fill="#666"/></svg>
<div class="abs" style="left:989.8px;top:951.7px;width:390.5px;height:51.5px;border-radius:5px;background:#f4f4f4;box-shadow:0 0 0 1px rgba(0,0,0,0.06),0 2px 3px rgba(0,0,0,0.16);overflow:hidden"><div style="position:absolute;left:0;top:0;width:28.5px;height:100%;background:repeating-linear-gradient(146.6deg,#d9d9d9 0px,#d9d9d9 4.2px,#f4f4f4 4.2px,#f4f4f4 11px)"></div></div>
<div class="t" style="left:1173.4px;top:968.9px;font-size:16px;color:#333;font-weight:normal;letter-spacing:1.35px;">0%</div>
<div class="t" style="left:987.5px;top:1044.4px;font-size:20px;color:#333;font-weight:normal;letter-spacing:-0.17px;">15 steps(s) left</div>
<div class="t" style="left:1221.8px;top:1044.4px;font-size:20px;color:#b4b4b4;font-weight:bold;letter-spacing:-0.66px;">Go to Next step</div>
<div class="abs" style="left:1467.5px;top:548px;width:479px;height:558px;border-radius:10px;background:#fff;box-shadow:0 2px 11px rgba(35,40,60,0.24)"></div>
<div class="abs" style="left:1489.5px;top:572px;width:96.5px;height:30px;border-radius:7px;background:#e5eefc"></div>
<div class="t" style="left:1496.8px;top:578.3px;font-size:17px;color:#1d4eaf;font-weight:normal;letter-spacing:0.44px;-webkit-text-stroke:0.35px #1d4eaf;">RUNNING</div>
<svg class="abs" style="left:1904.1px;top:579.1px;" width="6" height="16.5" viewBox="0 0 6 16.5"><g fill="#5e5e5e"><circle cx="3" cy="1.8" r="1.6"/><circle cx="3" cy="8" r="1.6"/><circle cx="3" cy="14.2" r="1.6"/></g></svg>
<div class="t" style="left:1502.8px;top:630.1px;font-size:28px;color:#1b1b1b;font-weight:normal;letter-spacing:0.00px;">+</div>
<svg class="abs" style="left:1518.0px;top:633px" width="8" height="22" viewBox="0 0 8 22"><path d="M0.5,1.4 L6,1.4 L6,20.6 L3.5,20.6 L3.5,3.8 L0.5,3.8 Z" fill="#1b1b1b"/></svg>
<div class="t" style="left:1526.5px;top:630.1px;font-size:28px;color:#1b1b1b;font-weight:normal;letter-spacing:0.00px;">6</div>
<div class="abs" style="left:1542.0px;top:629.5px;width:148px;height:26.5px;background:linear-gradient(90deg,#ececec,#f0f0f0 75%,rgba(250,250,250,0.3))"></div>
<div class="abs" style="left:1550.0px;top:637px;width:118px;height:11px;border-radius:6px;background:#d3d3d3;filter:blur(4.5px)"></div>
<div class="abs" style="left:1489.5px;top:684px;width:436px;height:1.5px;background:#cfcfcf"></div>
<div class="t" style="left:1502.5px;top:706.0px;font-size:19px;color:#6b6b6b;font-weight:normal;letter-spacing:1.23px;">Source App:</div>
<div class="t" style="left:1638.5px;top:706.0px;font-size:19px;color:#222;font-weight:normal;letter-spacing:0.86px;">vp_date_ranges</div>
<svg class="abs" style="left:1504.0px;top:740px;" width="21" height="17" viewBox="0 0 21 17"><g fill="none" stroke="#6b6b6b" stroke-width="1.7" stroke-linecap="round" stroke-linejoin="round"><path d="M2,1.2 L2,7.8 Q2,10.8 5,10.8 L19.2,10.8"/><path d="M14.6,6 L19.4,10.8 L14.6,15.6"/></g></svg>
<div class="t" style="left:1532.0px;top:739.0px;font-size:19px;color:#6b6b6b;font-weight:normal;letter-spacing:0.81px;">version tag:</div>
<div class="abs" style="left:1659.0px;top:749px;width:19px;height:1.5px;background:#6a6a6a"></div>
<div class="t" style="left:1503.0px;top:784.0px;font-size:19px;color:#6b6b6b;font-weight:normal;letter-spacing:1.43px;">Target App:</div>
<div class="t" style="left:1634.2px;top:784.0px;font-size:19px;color:#222;font-weight:normal;letter-spacing:1.32px;">testCaching</div>
<svg class="abs" style="left:1504.0px;top:817.5px;" width="21" height="17" viewBox="0 0 21 17"><g fill="none" stroke="#6b6b6b" stroke-width="1.7" stroke-linecap="round" stroke-linejoin="round"><path d="M2,1.2 L2,7.8 Q2,10.8 5,10.8 L19.2,10.8"/><path d="M14.6,6 L19.4,10.8 L14.6,15.6"/></g></svg>
<div class="t" style="left:1532.0px;top:816.5px;font-size:19px;color:#6b6b6b;font-weight:normal;letter-spacing:0.81px;">version tag:</div>
<div class="abs" style="left:1659.0px;top:826.6px;width:19px;height:1.5px;background:#6a6a6a"></div>
<div class="t" style="left:1502.0px;top:863.0px;font-size:19px;color:#6b6b6b;font-weight:normal;letter-spacing:1.25px;">Router Group:</div>
<div class="abs" style="left:1657.0px;top:856.3px;width:105.5px;height:33.3px;border-radius:7px;background:#f3f3f3"></div>
<div class="t" style="left:1664.5px;top:863.0px;font-size:19px;color:#333;font-weight:normal;letter-spacing:-0.17px;">DOCTEST</div>
<div class="t" style="left:1516.2px;top:918.7px;font-size:17px;color:#333;font-weight:normal;letter-spacing:0.38px;-webkit-text-stroke:0.2px #333;">Traffic Usage</div>
<svg class="abs" style="left:1878.2px;top:918.2px;" width="20" height="20" viewBox="0 0 20 20"><circle cx="10" cy="10" r="8.5" fill="none" stroke="#666" stroke-width="1.5"/><circle cx="9.9" cy="6.1" r="1.3" fill="#666"/><path d="M8.6,9 L11.1,9 L11.1,14.6 L12,15.7 L8,15.7 L8.9,14.6 L8.9,9.9 Z" fill="#666"/></svg>
<div class="abs" style="left:1511.8px;top:951.7px;width:390.5px;height:51.5px;border-radius:5px;background:#fff;box-shadow:0 0 0 1px rgba(0,0,0,0.06),0 2px 3px rgba(0,0,0,0.16);overflow:hidden"><div style="position:absolute;left:0;top:0;width:195px;height:100%;background:#5b94ea"></div><div style="position:absolute;left:195px;top:0;right:0;height:100%;background:repeating-linear-gradient(146.6deg,#8fbaf6 0px,#8fbaf6 4.2px,#fff 4.2px,#fff 11px)"></div></div>
<div class="t" style="left:1690.9px;top:968.9px;font-size:16px;color:#333;font-weight:normal;letter-spacing:1.12px;">50%</div>
<div class="t" style="left:1509.5px;top:1044.4px;font-size:20px;color:#333;font-weight:normal;letter-spacing:-0.16px;">1 steps(s) left</div>
<div class="t" style="left:1743.8px;top:1044.4px;font-size:20px;color:#1d63e3;font-weight:bold;letter-spacing:-0.66px;">Go to Next step</div>
<div class="abs" style="left:1326px;top:683px;width:10px;height:4px;background:#fff"></div>
<div class="abs" style="left:1400px;top:641px;width:142px;height:10px;background:#fff"></div>
<div class="abs" style="left:1532px;top:641px;width:10px;height:161px;background:#fff"></div>
<div class="abs" style="left:1400px;top:794px;width:100px;height:10px;background:#fff"></div>
<div class="abs" style="left:846px;top:609px;width:169.5px;height:151px;border-radius:6px;background:#fff;box-shadow:0 7px 26px rgba(0,0,0,0.21),0 1px 4px rgba(0,0,0,0.10)"></div>
<div class="t" style="left:867.0px;top:632.6px;font-size:18px;color:#2a2a2a;font-weight:normal;letter-spacing:1.42px;">Edit Steps</div>
<div class="t" style="left:867.0px;top:675.7px;font-size:18px;color:#2a2a2a;font-weight:normal;letter-spacing:1.62px;">Disable</div>
<div class="t" style="left:867.0px;top:718.7px;font-size:18px;color:#cf3349;font-weight:normal;letter-spacing:1.95px;">Delete</div>
<div class="abs" style="left:842.3px;top:658.8px;width:171.2px;height:50.4px;border:5px solid #d64a7b"></div>
<svg class="abs" style="left:0;top:0" width="2866" height="1446"><path d="M783.8,516 C787,548 800,566 831,580" fill="none" stroke="#d5487a" stroke-width="5"/><path d="M832.3,568.1 L851.5,587.7 L823.8,591.5 Z" fill="#d5487a"/></svg>
<div class="abs" style="left:65px;top:1350px;width:2801px;height:96px;background:linear-gradient(180deg,rgba(0,0,0,0) 0%,rgba(0,0,0,0.012) 40%,rgba(0,0,0,0.04) 75%,rgba(0,0,0,0.09) 100%);-webkit-mask-image:linear-gradient(90deg,#000 0%,#000 88%,transparent 100%);mask-image:linear-gradient(90deg,#000 0%,#000 88%,transparent 100%)"></div>
<div class="abs" style="left:0;top:1434px;width:12px;height:12px;background:radial-gradient(circle at 12px 0px, transparent 10.6px, #8494cc 11.2px, #8494cc 11.8px, #0c1420 12.6px, #1d3a5c 14px)"></div>
<div class="abs" style="left:2856px;top:1436px;width:10px;height:10px;background:radial-gradient(circle at 0px 0px, transparent 9.3px, #2a1408 10px, #8a4420 11.5px)"></div>
</body></html>
